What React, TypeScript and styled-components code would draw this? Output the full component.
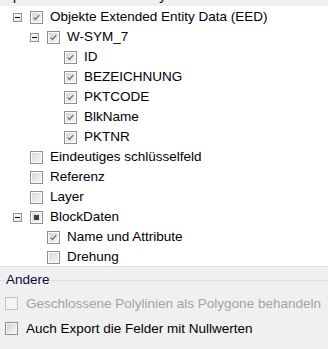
import React from "react";
import styled, { createGlobalStyle } from "styled-components";

const GlobalStyle = createGlobalStyle`
  html, body { margin: 0; padding: 0; background: #f0f0f0; }
  body {
    font-family: "Liberation Sans", Arial, sans-serif;
    font-size: 13.5px;
    color: #000;
  }
  #root { width: 328px; height: 349px; overflow: hidden; }
`;

const Page = styled.div`
  width: 328px;
  height: 349px;
  display: flex;
  flex-direction: column;
  background: #f0f0f0;
  overflow: hidden;
`;

const CaptionClip = styled.div`
  flex: none;
  height: 6px;
  overflow: hidden;
`;

const Caption = styled.div`
  margin-top: -12px;
  padding-left: 4px;
  line-height: 16px;
  white-space: nowrap;
`;

const Tree = styled.div`
  flex: none;
  background: #fff;
  height: 259px;
  padding-top: 1px;
  overflow: hidden;
  border-bottom: 1px solid #d9e1e7;
`;

const Row = styled.div<{ $level: number }>`
  display: flex;
  align-items: center;
  height: 20px;
  padding-left: ${(p) => 13 + p.$level * 17}px;
  white-space: nowrap;
`;

const ExpanderSlot = styled.span`
  flex: none;
  width: 9px;
  height: 9px;
  margin-right: 8px;
  display: flex;
`;

const TreeCheck = styled.span`
  flex: none;
  width: 13px;
  height: 13px;
  margin-right: 7px;
  display: flex;
`;

const Label = styled.span`
  line-height: 20px;
`;

const Group = styled.section`
  margin-top: 6px;
  display: flex;
  flex-direction: column;
`;

const GroupHeader = styled.div`
  display: flex;
  align-items: center;
  height: 14px;
`;

const GroupLine = styled.span<{ $grow?: boolean }>`
  height: 1px;
  background: #d5dfe5;
  width: 5px;
  flex: ${(p) => (p.$grow ? "1" : "none")};
`;

const GroupTitle = styled.span`
  padding: 0 1px;
  line-height: 14px;
  color: #0a0a3c;
`;

const CheckRows = styled.div`
  margin-top: 4px;
  display: flex;
  flex-direction: column;
`;

const CheckRow = styled.label<{ $disabled?: boolean }>`
  display: flex;
  align-items: center;
  height: 25px;
  padding-left: 5px;
  color: ${(p) => (p.$disabled ? "#a3a3a3" : "#000")};
  white-space: nowrap;
`;

const FormBox = styled.span`
  flex: none;
  width: 13px;
  height: 13px;
  margin-right: 8px;
  display: flex;
`;

type CheckState = "checked" | "unchecked" | "mixed";

const Expander = () => (
  <svg width="9" height="9" viewBox="0 0 9 9">
    <defs>
      <linearGradient id="expg" x1="0" y1="0" x2="1" y2="1">
        <stop offset="0" stopColor="#ffffff" />
        <stop offset="1" stopColor="#e4e4e4" />
      </linearGradient>
    </defs>
    <rect x="0.5" y="0.5" width="8" height="8" fill="url(#expg)" stroke="#929292" />
    <rect x="2" y="4" width="5" height="1" fill="#000" />
  </svg>
);

const TreeCheckIcon = ({ state }: { state: CheckState }) => (
  <svg width="13" height="13" viewBox="0 0 13 13">
    <defs>
      <linearGradient id="tcg" x1="0" y1="0" x2="1" y2="1">
        <stop offset="0" stopColor="#d8d8d8" />
        <stop offset="1" stopColor="#f3f3f3" />
      </linearGradient>
    </defs>
    <rect x="0.5" y="0.5" width="12" height="12" fill="#fff" stroke="#8f8f8f" />
    <rect x="2" y="2" width="9" height="9" fill="url(#tcg)" />
    {state === "checked" && (
      <path d="M3.8 6.6 L5.5 8.3 L9.2 4.2" fill="none" stroke="#5d6673" strokeWidth="1.2" />
    )}
    {state === "mixed" && <rect x="4" y="4" width="5" height="5" fill="#404040" />}
  </svg>
);

const FormCheckIcon = ({ disabled }: { disabled?: boolean }) => (
  <svg width="13" height="13" viewBox="0 0 13 13">
    <defs>
      <linearGradient id="fcg" x1="0" y1="0" x2="1" y2="1">
        <stop offset="0" stopColor="#d2d2d2" />
        <stop offset="1" stopColor="#f8f8f8" />
      </linearGradient>
    </defs>
    <rect
      x="0.5"
      y="0.5"
      width="12"
      height="12"
      fill="#f4f4f4"
      stroke={disabled ? "#c2c2c2" : "#8e8f8f"}
    />
    {!disabled && <rect x="2" y="2" width="9" height="9" fill="url(#fcg)" />}
  </svg>
);

type Node = { label: string; level: number; expander?: boolean; state: CheckState };

const nodes: Node[] = [
  { label: "Objekte Extended Entity Data (EED)", level: 0, expander: true, state: "checked" },
  { label: "W-SYM_7", level: 1, expander: true, state: "checked" },
  { label: "ID", level: 2, state: "checked" },
  { label: "BEZEICHNUNG", level: 2, state: "checked" },
  { label: "PKTCODE", level: 2, state: "checked" },
  { label: "BlkName", level: 2, state: "checked" },
  { label: "PKTNR", level: 2, state: "checked" },
  { label: "Eindeutiges schlüsselfeld", level: 0, state: "unchecked" },
  { label: "Referenz", level: 0, state: "unchecked" },
  { label: "Layer", level: 0, state: "unchecked" },
  { label: "BlockDaten", level: 0, expander: true, state: "mixed" },
  { label: "Name und Attribute", level: 1, state: "checked" },
  { label: "Drehung", level: 1, state: "unchecked" },
];

export default function App() {
  return (
    <Page>
      <GlobalStyle />
      <CaptionClip>
        <Caption>Spalten im Extended Entity Data</Caption>
      </CaptionClip>
      <Tree>
        {nodes.map((n) => (
          <Row key={n.label} $level={n.level}>
            <ExpanderSlot>{n.expander && <Expander />}</ExpanderSlot>
            <TreeCheck>
              <TreeCheckIcon state={n.state} />
            </TreeCheck>
            <Label>{n.label}</Label>
          </Row>
        ))}
      </Tree>
      <Group>
        <GroupHeader>
          <GroupLine />
          <GroupTitle>Andere</GroupTitle>
          <GroupLine $grow />
        </GroupHeader>
        <CheckRows>
          <CheckRow $disabled>
            <FormBox>
              <FormCheckIcon disabled />
            </FormBox>
            Geschlossene Polylinien als Polygone behandeln
          </CheckRow>
          <CheckRow>
            <FormBox>
              <FormCheckIcon />
            </FormBox>
            Auch Export die Felder mit Nullwerten
          </CheckRow>
        </CheckRows>
      </Group>
    </Page>
  );
}
